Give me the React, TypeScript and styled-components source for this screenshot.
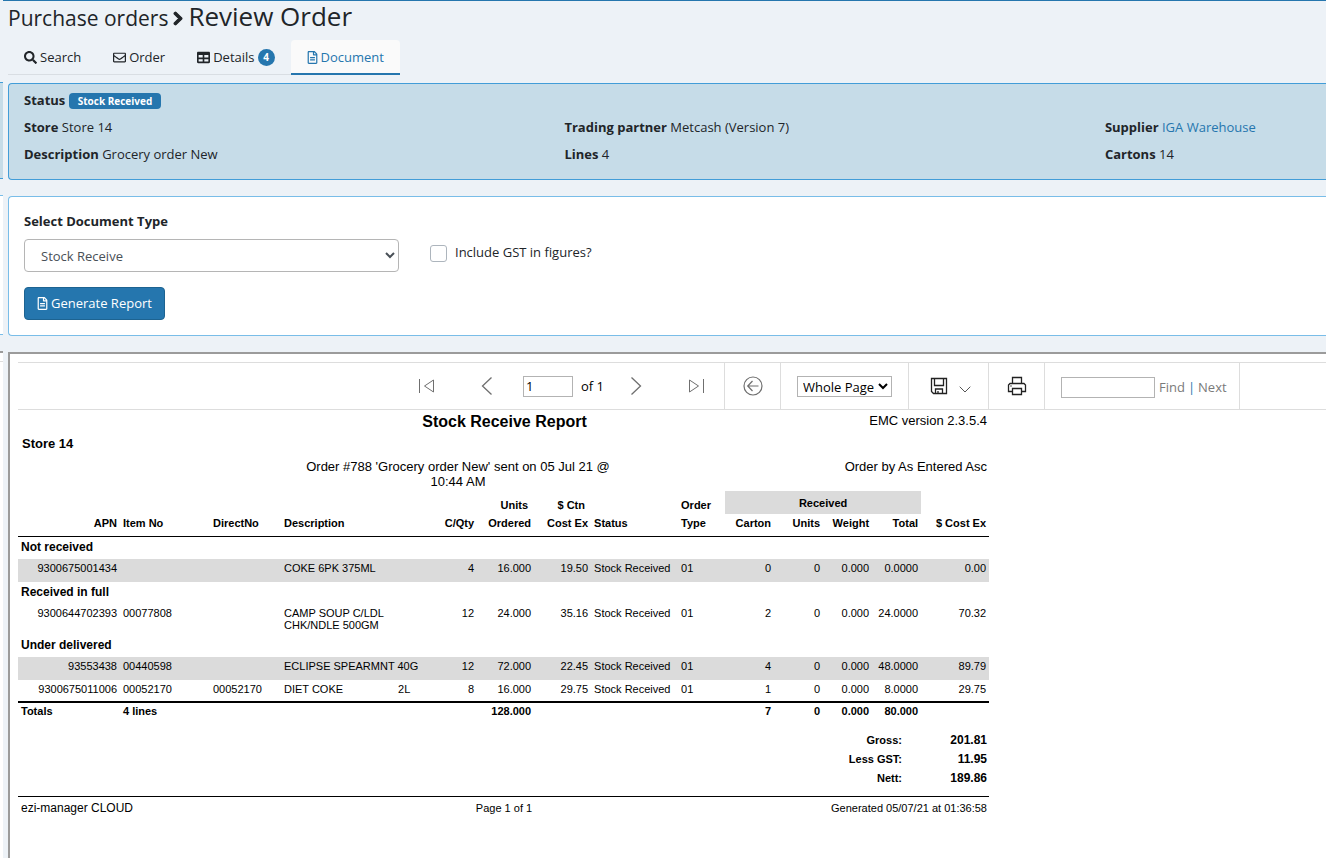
import React from 'react';
import styled, { createGlobalStyle } from 'styled-components';
import { FaSearch, FaRegEnvelope, FaTable, FaRegFileAlt, FaChevronRight } from 'react-icons/fa';

const GlobalStyle = createGlobalStyle`
  *, *::before, *::after { box-sizing: border-box; }
  body {
    margin: 0;
    background: #edf2f7;
    color: #212529;
    font: 13px/19px "Open Sans", "Noto Sans", sans-serif;
  }
  input, select, button { font-family: inherit; font-size: 13px; }
`;

const blue = '#2576ae';

const Shell = styled.div`
  display: grid;
  grid-template-columns: 3px minmax(0, 1fr);
  min-height: 100vh;
`;

/* Edge of the neighbouring page, peeking in on the left */
const Edge = styled.div`
  display: flex;
  flex-direction: column;
  padding-top: 82px;
`;
const EdgePanel = styled.div<{ $info?: boolean }>`
  height: ${p => (p.$info ? 97 : 140)}px;
  margin-bottom: 16px;
  background: ${p => (p.$info ? '#c6dce8' : '#fff')};
  border: solid ${p => (p.$info ? '#429dd8' : '#79bde8')};
  border-width: 1px 0;
`;
const EdgeFrame = styled.div`
  flex: 1;
  background: #fff;
  border-top: 2px solid #9b9b9b;
  padding-top: 8px;
  &::before { content: ""; display: block; border-top: 1px solid #ddd; }
`;

const Page = styled.main`
  display: flex;
  flex-direction: column;
  border-top: 1px solid ${blue};
  padding-left: 5px;
`;

const Title = styled.h1`
  display: flex;
  align-items: baseline;
  gap: 5px;
  margin: 0;
  height: 39px;
  font-size: 26px;
  line-height: 30px;
  font-weight: 400;
  svg {
    width: 10px;
    height: 15px;
    stroke: currentColor;
    stroke-width: 40;
  }
`;
const TitleParent = styled.span`
  font-size: 21px;
`;

const Tabs = styled.nav`
  display: flex;
  align-self: flex-start;
  height: 35px;
  margin-bottom: 8px;
  box-shadow: inset 0 -1px #d9dee3;
`;
const Tab = styled.a<{ $active?: boolean }>`
  display: flex;
  align-items: center;
  gap: 3px;
  padding: 2px 16px 0;
  border-bottom: 2px solid ${p => (p.$active ? blue : 'transparent')};
  border-radius: 4px 4px 0 0;
  background: ${p => (p.$active ? '#fafafa' : 'transparent')};
  color: ${p => (p.$active ? blue : '#212529')};
  text-decoration: none;
`;
const DocIcon = styled(FaRegFileAlt)`
  width: 11px;
  height: 13px;
`;
const Count = styled.span`
  width: 17px;
  height: 17px;
  border-radius: 50%;
  background: ${blue};
  color: #fff;
  font-size: 10px;
  font-weight: 700;
  line-height: 17px;
  text-align: center;
`;

const Panel = styled.section`
  padding: 15px;
  margin-bottom: 16px;
  background: #fff;
  border: 1px solid #79bde8;
  border-right: 0;
  border-radius: 4px 0 0 4px;
`;
const InfoPanel = styled(Panel)`
  display: grid;
  grid-template-columns: 22fr 22fr 9fr;
  row-gap: 8px;
  padding: 7px 0 15px 15px;
  background: #c6dce8;
  border-color: #429dd8;
`;
const Fact = styled.div<{ $wide?: boolean }>`
  grid-column: ${p => (p.$wide ? '1 / -1' : 'auto')};
  a { color: ${blue}; text-decoration: none; }
`;
const StatusPill = styled.span`
  display: inline-block;
  padding: 0 9px;
  border-radius: 4px;
  background: ${blue};
  color: #fff;
  font-size: 10px;
  font-weight: 700;
  line-height: 16px;
`;

const FormPanel = styled(Panel)`
  padding-bottom: 15px;
`;
const FieldLabel = styled.label`
  display: block;
  font-weight: 700;
  margin-bottom: 8px;
`;
const FieldRow = styled.div`
  display: flex;
  gap: 31px;
  margin-bottom: 15px;
`;
const DocSelect = styled.select`
  width: 375px;
  height: 33px;
  padding: 0 12px;
  border: 1px solid #b5b5b5;
  border-radius: 4px;
  background: #fff;
  color: #495057;
`;
const CheckLabel = styled.label`
  display: flex;
  align-items: flex-end;
  align-self: flex-start;
  gap: 8px;
  padding-top: 4px;
`;
const CheckBox = styled.input`
  appearance: none;
  width: 17px;
  height: 17px;
  margin: 0;
  border: 1px solid #adb5bd;
  border-radius: 3px;
  background: #fff;
  &:checked { background: ${blue}; }
`;
const PrimaryButton = styled.button`
  display: flex;
  align-items: center;
  gap: 3px;
  height: 33px;
  padding: 0 12px 1px;
  border: 1px solid #1d6391;
  border-radius: 4px;
  background: ${blue};
  color: #fff;
`;

const ReportFrame = styled.section`
  flex: 1;
  padding: 8px 0 0 8px;
  background: #fff;
  border: solid #9b9b9b;
  border-width: 2px 0 0 2px;
  color: #000;
`;
const Toolbar = styled.div`
  display: flex;
  height: 48px;
  border: solid #ddd;
  border-width: 1px 0;
`;
const ToolGroup = styled.div<{ $width: number }>`
  display: flex;
  align-items: center;
  justify-content: center;
  flex: none;
  width: ${p => p.$width}px;
  border-right: 1px solid #ddd;
`;
const Pager = styled(ToolGroup)`
  justify-content: flex-end;
`;
const IconButton = styled.button<{ $width?: number }>`
  display: flex;
  justify-content: center;
  width: ${p => p.$width ?? 20}px;
  padding: 0;
  border: 0;
  background: none;
`;
const Glyph = styled.svg`
  display: block;
  flex: none;
  fill: none;
`;
const PageBox = styled.label`
  display: flex;
  align-items: center;
  gap: 8px;
  margin-left: 6px;
`;
const ToolInput = styled.input<{ $width: number }>`
  width: ${p => p.$width}px;
  height: 21px;
  padding: 0 2px;
  border: 1px solid #b3b3b3;
`;
const ZoomSelect = styled.select`
  height: 21px;
  width: 95px;
  padding: 0 1px;
  border: 1px solid #b3b3b3;
  background: #fff;
  color: #000;
`;
const ExportGroup = styled(ToolGroup)`
  justify-content: flex-start;
  gap: 10px;
  padding-left: 20px;
`;
const DownGlyph = styled(Glyph)`
  margin-top: 6px;
`;
const SearchGroup = styled(ToolGroup)`
  justify-content: flex-start;
  gap: 4px;
  padding: 3px 0 0 16px;
`;
const SearchLinks = styled.span`
  display: flex;
  gap: 3px;
`;
const SearchLink = styled.a`
  color: #7a7a7a;
  text-decoration: none;
`;
const Bar = styled.span`
  color: ${blue};
`;

const Sheet = styled.article`
  width: 971px;
  font: 13px/15px "Liberation Sans", Arial, sans-serif;
`;
const SheetHead = styled.header`
  display: grid;
  grid-template-columns: 276px 320px 1fr;
  padding: 3px 2px 2px 4px;
`;
const SheetTitle = styled.h2`
  grid-area: 1 / 1 / 2 / -1;
  margin: 0;
  font-size: 16px;
  line-height: 18px;
  text-align: center;
`;
const HeadText = styled.div<{ $align: 'center' | 'right'; $row: number; $col: number }>`
  grid-area: ${p => p.$row} / ${p => p.$col};
  text-align: ${p => p.$align};
`;
const StoreName = styled.div`
  grid-area: 2 / 1 / 3 / -1;
  margin: 5px 0 8px;
  font-weight: 700;
`;

const Lines = styled.table`
  width: 100%;
  table-layout: fixed;
  border-spacing: 0;
  font-size: 11px;
  line-height: 12px;
`;
const Th = styled.th<{ $left?: boolean; $center?: boolean; $last?: boolean }>`
  height: 23px;
  padding: ${p => (p.$last ? 3 : 8)}px 3px 0;
  border-bottom: ${p => (p.$last ? '1px solid #000' : '0')};
  text-align: ${p => (p.$center ? 'center' : p.$left ? 'left' : 'right')};
  vertical-align: top;
  white-space: nowrap;
`;
const BandTh = styled(Th)`
  padding-top: 6px;
  background: #dbdbdb;
`;
const GroupTh = styled.th`
  height: 22px;
  padding: 3px 3px 0;
  font-size: 12px;
  line-height: 14px;
  text-align: left;
  vertical-align: top;
`;
const Row = styled.tr<{ $shade?: boolean }>`
  height: ${p => (p.$shade ? 23 : 21)}px;
  background: ${p => (p.$shade ? '#dbdbdb' : 'transparent')};
`;
const Td = styled.td<{ $left?: boolean }>`
  padding: 3px 3px 4px;
  text-align: ${p => (p.$left ? 'left' : 'right')};
  vertical-align: top;
  white-space: pre;
`;
const TotalTd = styled(Td)`
  padding: 2px 3px 0;
  height: 22px;
  border-top: 2px solid #000;
  font-weight: 700;
`;

const Summary = styled.dl`
  display: grid;
  grid-template-columns: 1fr 85px;
  row-gap: 4px;
  margin: 10px 0;
  padding-right: 2px;
  font-size: 11px;
  font-weight: 700;
  text-align: right;
  dd { margin: 0; font-size: 12px; }
`;
const SheetFoot = styled.footer`
  display: grid;
  grid-template-columns: 1fr auto 1fr;
  padding: 4px 2px 0 3px;
  border-top: 1px solid #000;
  font-size: 11px;
  span:first-child { font-size: 12px; }
  span:last-child { text-align: right; }
`;

const columnWidths = [102, 90, 71, 147, 49, 57, 57, 87, 47, 49, 49, 49, 49, 68];
const leftColumns = new Set([1, 2, 3, 7, 8]);
const isLeft = (i: number) => leftColumns.has(i);

const headings = ['APN', 'Item No', 'DirectNo', 'Description', 'C/Qty', 'Ordered', 'Cost Ex', 'Status', 'Type', 'Carton', 'Units', 'Weight', 'Total', '$ Cost Ex'];

type Line = { shade?: boolean; cells: string[] };
const groups: { name: string; lines: Line[] }[] = [
  {
    name: 'Not received',
    lines: [{ shade: true, cells: ['9300675001434', '', '', 'COKE 6PK 375ML', '4', '16.000', '19.50', 'Stock Received', '01', '0', '0', '0.000', '0.0000', '0.00'] }],
  },
  {
    name: 'Received in full',
    lines: [{ cells: ['9300644702393', '00077808', '', 'CAMP SOUP C/LDL\nCHK/NDLE 500GM', '12', '24.000', '35.16', 'Stock Received', '01', '2', '0', '0.000', '24.0000', '70.32'] }],
  },
  {
    name: 'Under delivered',
    lines: [
      { shade: true, cells: ['93553438', '00440598', '', 'ECLIPSE SPEARMNT 40G', '12', '72.000', '22.45', 'Stock Received', '01', '4', '0', '0.000', '48.0000', '89.79'] },
      { cells: ['9300675011006', '00052170', '00052170', 'DIET COKE' + ' '.repeat(18) + '2L', '8', '16.000', '29.75', 'Stock Received', '01', '1', '0', '0.000', '8.0000', '29.75'] },
    ],
  },
];
const totals = ['Totals', '4 lines', '', '', '', '128.000', '', '', '', '7', '0', '0.000', '80.000', ''];

const FirstIcon = () => (
  <Glyph width="16" height="16" stroke="#6f6f6f"><path d="M.5 1v14M14.500 2v12L5.500 8z" /></Glyph>
);
const LastIcon = () => (
  <Glyph width="16" height="16" stroke="#6f6f6f"><path d="M15.500 1v14M1.500 2v12L10.500 8z" /></Glyph>
);
const PrevIcon = () => (
  <Glyph width="12" height="18" stroke="#6f6f6f" strokeWidth="1.300"><path d="M10.500.5 1.500 9l9 8.500" /></Glyph>
);
const NextIcon = () => (
  <Glyph width="12" height="18" stroke="#6f6f6f" strokeWidth="1.300"><path d="M1.500.5 10.500 9l-9 8.500" /></Glyph>
);
const BackIcon = () => (
  <Glyph width="20" height="20" stroke="#6f6f6f" strokeWidth="1.200"><circle cx="10" cy="10" r="9" /><path d="M15.500 10H5M9.500 5 4.700 10l4.800 5" /></Glyph>
);
const SaveIcon = () => (
  <Glyph width="18" height="18" stroke="#222" strokeWidth="1.300">
    <path d="M1.500 1.500h15v15h-13l-2-2zM4.500 1.500v7h9v-7M5.500 16.500v-4.500h7v4.500M8 14v2.500" />
  </Glyph>
);
const DownIcon = () => (
  <DownGlyph width="12" height="7" stroke="#555"><path d="M.7.7 6 6 11.300.7" /></DownGlyph>
);
const PrintIcon = () => (
  <Glyph width="20" height="20" stroke="#222" strokeWidth="1.300">
    <path d="M5.500 7V1.500h9V7M5.500 15.500H1.500v-6.500l1.500-1.500h14l1.500 1.500v6.500h-4M5.500 12.500h9v6h-9zM3.500 10h1" />
  </Glyph>
);

export default function App() {
  return (
    <Shell>
      <GlobalStyle />
      <Edge aria-hidden="true">
        <EdgePanel $info />
        <EdgePanel />
        <EdgeFrame />
      </Edge>
      <Page>
        <Title>
          <TitleParent>Purchase orders</TitleParent>
          <FaChevronRight />
          <span>Review Order</span>
        </Title>
        <Tabs>
          <Tab href="#search"><FaSearch />Search</Tab>
          <Tab href="#order"><FaRegEnvelope />Order</Tab>
          <Tab href="#details"><FaTable />Details<Count>4</Count></Tab>
          <Tab href="#document" $active><DocIcon />Document</Tab>
        </Tabs>

        <InfoPanel>
          <Fact $wide><b>Status</b> <StatusPill>Stock Received</StatusPill></Fact>
          <Fact><b>Store</b> Store 14</Fact>
          <Fact><b>Trading partner</b> Metcash (Version 7)</Fact>
          <Fact><b>Supplier</b> <a href="#supplier">IGA Warehouse</a></Fact>
          <Fact><b>Description</b> Grocery order New</Fact>
          <Fact><b>Lines</b> 4</Fact>
          <Fact><b>Cartons</b> 14</Fact>
        </InfoPanel>

        <FormPanel>
          <FieldLabel htmlFor="docType">Select Document Type</FieldLabel>
          <FieldRow>
            <DocSelect id="docType" defaultValue="receive">
              <option value="receive">Stock Receive</option>
            </DocSelect>
            <CheckLabel><CheckBox type="checkbox" />Include GST in figures?</CheckLabel>
          </FieldRow>
          <PrimaryButton type="button"><DocIcon />Generate Report</PrimaryButton>
        </FormPanel>

        <ReportFrame>
          <Toolbar>
            <Pager $width={707}>
              <IconButton aria-label="First page" $width={60}><FirstIcon /></IconButton>
              <IconButton aria-label="Previous page" $width={60}><PrevIcon /></IconButton>
              <PageBox>
                <ToolInput $width={50} defaultValue="1" aria-label="Current page" />
                of 1
              </PageBox>
              <IconButton aria-label="Next page" $width={64}><NextIcon /></IconButton>
              <IconButton aria-label="Last page" $width={56}><LastIcon /></IconButton>
            </Pager>
            <ToolGroup $width={56}>
              <IconButton aria-label="Back to parent report"><BackIcon /></IconButton>
            </ToolGroup>
            <ToolGroup $width={128}>
              <ZoomSelect aria-label="Zoom" defaultValue="page"><option value="page">Whole Page</option></ZoomSelect>
            </ToolGroup>
            <ExportGroup $width={80}>
              <IconButton aria-label="Export"><SaveIcon /></IconButton>
              <DownIcon />
            </ExportGroup>
            <ToolGroup $width={56}>
              <IconButton aria-label="Print"><PrintIcon /></IconButton>
            </ToolGroup>
            <SearchGroup $width={195}>
              <ToolInput $width={94} aria-label="Find text" />
              <SearchLinks>
                <SearchLink href="#find">Find</SearchLink>
                <Bar>|</Bar>
                <SearchLink href="#next">Next</SearchLink>
              </SearchLinks>
            </SearchGroup>
          </Toolbar>

          <Sheet>
            <SheetHead>
              <SheetTitle>Stock Receive Report</SheetTitle>
              <HeadText $align="right" $row={1} $col={3}>EMC version 2.3.5.4</HeadText>
              <StoreName>Store 14</StoreName>
              <HeadText $align="center" $row={3} $col={2}>Order #788 'Grocery order New' sent on 05 Jul 21 @ 10:44 AM</HeadText>
              <HeadText $align="right" $row={3} $col={3}>Order by As Entered Asc</HeadText>
            </SheetHead>
            <Lines>
              <colgroup>{columnWidths.map((w, i) => <col key={i} width={w} />)}</colgroup>
              <thead>
                <tr>
                  <Th as="td" colSpan={5} />
                  <Th>Units&nbsp;</Th>
                  <Th>$ Ctn&nbsp;</Th>
                  <Th as="td" />
                  <Th $left>Order</Th>
                  <BandTh colSpan={4} $center>Received</BandTh>
                  <Th as="td" />
                </tr>
                <tr>{headings.map((h, i) => <Th key={i} $last $left={isLeft(i)}>{h}</Th>)}</tr>
              </thead>
              {groups.map(g => (
                <tbody key={g.name}>
                  <tr><GroupTh colSpan={14}>{g.name}</GroupTh></tr>
                  {g.lines.map(line => (
                    <Row key={line.cells[0]} $shade={line.shade}>
                      {line.cells.map((c, i) => <Td key={i} $left={isLeft(i)}>{c}</Td>)}
                    </Row>
                  ))}
                </tbody>
              ))}
              <tfoot>
                <tr>{totals.map((c, i) => <TotalTd key={i} $left={i === 0 || isLeft(i)}>{c}</TotalTd>)}</tr>
              </tfoot>
            </Lines>
            <Summary>
              <dt>Gross:</dt><dd>201.81</dd>
              <dt>Less GST:</dt><dd>11.95</dd>
              <dt>Nett:</dt><dd>189.86</dd>
            </Summary>
            <SheetFoot>
              <span>ezi-manager CLOUD</span>
              <span>Page 1 of 1</span>
              <span>Generated 05/07/21 at 01:36:58</span>
            </SheetFoot>
          </Sheet>
        </ReportFrame>
      </Page>
    </Shell>
  );
}
